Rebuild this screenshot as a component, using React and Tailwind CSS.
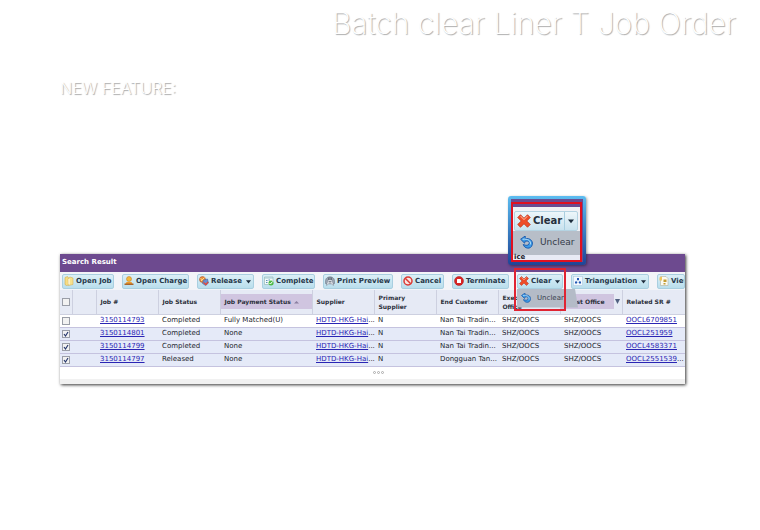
import React from 'react';

const orders = [
  { job: '3150114793', status: 'Completed', pay: 'Fully Matched(U)', customer: 'Nan Tai Tradin...', sr: 'OOCL6709851', more: '', checked: false },
  { job: '3150114801', status: 'Completed', pay: 'None', customer: 'Nan Tai Tradin...', sr: 'OOCL251959', more: '', checked: true },
  { job: '3150114799', status: 'Completed', pay: 'None', customer: 'Nan Tai Tradin...', sr: 'OOCL4583371', more: '', checked: true },
  { job: '3150114797', status: 'Released', pay: 'None', customer: 'Dongguan Tan...', sr: 'OOCL2551539', more: '...', checked: true },
];

function Svg({ children, className = 'size-[10px]' }) {
  return (
    <svg viewBox="0 0 20 20" className={`${className} shrink-0`} aria-hidden="true">
      {children}
    </svg>
  );
}

const FolderIcon = () => (
  <Svg>
    <path d="M2 3l5-2 2 3v14l-4 1-3-2z" fill="#f6dc84" stroke="#c9a13c" />
    <path d="M8 5l4-3 6 2v13l-9 2z" fill="#f6e08c" stroke="#d0aa48" />
    <path d="M10 6v11" stroke="#fff" strokeWidth="2" />
  </Svg>
);
const PersonIcon = () => (
  <Svg>
    <circle cx="10" cy="6" r="5" fill="#f5b93c" stroke="#c27a1c" />
    <path d="M5 12h10l2 4H3z" fill="#f09a2c" />
    <path d="M1 15h18v3H1z" fill="#a8662c" />
  </Svg>
);
const ReleaseIcon = () => (
  <Svg>
    <circle cx="7" cy="7" r="6" fill="#e88a3c" stroke="#a04a24" />
    <path d="M3 5l8 5M4 10l7-7" stroke="#ffe08a" strokeWidth="2" />
    <path d="M9 8l8-2 2 8-6 5-6-4z" fill="#6b8fd0" stroke="#36549a" />
    <path d="M9 13l5 4 4-5" fill="none" stroke="#e24a38" strokeWidth="2.5" />
  </Svg>
);
const CompleteIcon = () => (
  <Svg>
    <path d="M1 2h17v15H1z" fill="#f4faf8" stroke="#7ea5a0" />
    <path d="M1 3h17v2H1z" fill="#9cc4cf" />
    <path d="M4 9h3M9 8h3M4 13h3" stroke="#5c8fb8" strokeWidth="2" />
    <circle cx="14" cy="14" r="5" fill="#4dbb45" />
    <path d="M11 14l2 2 4-5" fill="none" stroke="#fff" strokeWidth="2" />
  </Svg>
);
const PrintIcon = () => (
  <Svg>
    <path d="M1 15V9C2-1 18-1 19 9v6l-3 2-2-8H6l-2 8z" fill="#9aa3b0" stroke="#65707e" />
    <path d="M6 8h8l3 11-4-3H7l-4 3z" fill="#f5f8fb" stroke="#7a8494" />
    <path d="M7 3v5m3-6v6m3-5v5M7 11h6M7 14h6" stroke="#56616f" strokeWidth="1.5" />
  </Svg>
);
const CancelIcon = () => (
  <Svg>
    <circle cx="10" cy="10" r="8" fill="#fbe4e0" stroke="#dc3a34" strokeWidth="3" />
    <path d="M4.500 4.500l11 11" stroke="#dc3a34" strokeWidth="3" />
  </Svg>
);
const StopIcon = () => (
  <Svg>
    <circle cx="10" cy="10" r="9" fill="#d92424" stroke="#a51b1b" />
    <rect x="6" y="6" width="8" height="8" rx="1" fill="#fff" />
  </Svg>
);
const CrossIcon = ({ className }) => (
  <Svg className={className}>
    <path d="M5 1l5 5 5-5 4 4-5 5 5 5-4 4-5-5-5 5-4-4 5-5-5-5z" fill="#ee4c28" stroke="#b92c14" strokeLinejoin="round" />
    <path d="M5 3l5 5 5-5" fill="none" stroke="#fba183" strokeWidth="1.5" />
  </Svg>
);
const UndoIcon = ({ className }) => (
  <Svg className={className}>
    <path d="M8 0L1 5l6 6 1-3c5-1 7 1 6 4-1 3-5 3-9 1 1 6 12 9 14 0 1-6-4-10-11-9z" fill="#3f9be6" stroke="#1c5cae" strokeWidth="1.5" strokeLinejoin="round" />
    <path d="M4 5c8-1 13 2 12 8" fill="none" stroke="#b8e2fb" strokeWidth="1.5" />
  </Svg>
);
const TriangleIcon = () => (
  <Svg>
    <rect x="1" y="1" width="18" height="18" fill="#f3f8fd" stroke="#a7c4dc" />
    <path d="M10 7l-4 6h8z" fill="none" stroke="#7ea4d4" />
    <path d="M8 4h4v4H8zM4 11h4v4H4zM12 11h4v4h-4z" fill="#2458b4" />
  </Svg>
);
const ViewIcon = () => (
  <Svg>
    <path d="M3 1h11l4 4v14H3z" fill="#fbfaf0" stroke="#a8a48c" />
    <path d="M1 3l5-2v8H1z" fill="#f0c65c" />
    <path d="M9 7h6v5H9zM9 14h4v3H9z" fill="#c39c34" />
  </Svg>
);

function Tool({ icon, label, width, menu }) {
  return (
    <button type="button" className={`flex h-[15px] items-center gap-[2px] overflow-hidden rounded-[2px] border border-[#a9cfe0] bg-linear-to-b from-[#dceff7] to-[#b9deec] pl-px font-bold whitespace-nowrap text-[#26384a] ${width}`}>
      {icon}
      <span>{label}</span>
      {menu && <Caret />}
    </button>
  );
}

function Caret({ className = 'size-[5px]' }) {
  return (
    <svg viewBox="0 0 4 4" className={`${className} mx-auto shrink-0`} aria-hidden="true">
      <path d="M0 1h4L2 3.500z" fill="#1d2c3c" />
    </svg>
  );
}

function Magnifier() {
  return (
    <div className="absolute -top-[78px] -left-[9px] z-20 h-[69px] w-[78px] rounded-[3px] bg-linear-to-b from-[#5cbcf0] to-[#1f4496] p-[3px] shadow-[1px_1px_3px_#0006]">
      <div className="h-full bg-[#6a4c90] pt-[3px] pr-px">
        <div className="flex h-full flex-col overflow-hidden border-2 border-[#e01020] bg-[#e8ebf5]">
          <div className="h-[3px] shrink-0 bg-[#6a4c90]" />
          <div className="bg-[#f1f1f5] px-px pt-[4px]">
            <button type="button" className="flex h-[20px] w-[64px] items-center rounded-[2px] border border-[#b4d3e2] bg-linear-to-b from-[#edf6fa] to-[#c8e2ee] pl-[2px] text-[10px] font-bold text-[#26303c]">
              <CrossIcon className="size-[14px]" />
              <span className="mr-[2px] ml-[2px]">Clear</span>
              <span className="flex h-full flex-1 items-center border-l border-[#a9cfe0]">
                <Caret className="size-[6px]" />
              </span>
            </button>
          </div>
          <button type="button" className="flex h-[24px] shrink-0 items-center gap-[7px] bg-[#b7bec8] pl-[7px] text-[9px] text-[#333b48]">
            <UndoIcon className="size-[13px] shrink-0" />
            Unclear
          </button>
          <div className="pl-px leading-[5px] font-bold">ice</div>
        </div>
      </div>
    </div>
  );
}

const head = 'border-r border-[#cdd0e0] pl-[4px] text-left align-middle leading-[9px] font-bold text-[#2c313c]';
const cell = 'whitespace-nowrap pl-[4px]';
const link = 'text-[#2a25b4] underline';

export default function App() {
  return (
    <main className="min-h-screen bg-white font-['DejaVu_Sans',Verdana,sans-serif] text-[7px] leading-[9px] text-[#22252c]">
      <h1 className="pt-[5px] pr-[24px] text-right font-[Inter,sans-serif] text-[30px] leading-[36px] font-extralight text-white [text-shadow:1px_1px_1px_#0005]">
        Batch clear Liner T Job Order
      </h1>
      <h2 className="mt-[37px] pl-[60px] font-[Inter,sans-serif] text-[16px] leading-[20px] font-light text-white [text-shadow:1px_1px_1px_#0005]">
        NEW FEATURE:
      </h2>

      <section className="mt-[156px] mr-[75px] ml-[60px] bg-white shadow-[1px_1px_3px_#000c]">
        <h3 className="h-[18px] bg-[#6d4a8f] pl-[2px] leading-[16px] font-bold text-white">Search Result</h3>

        <div className="flex h-[18px] items-center gap-[8px] bg-[#f3f4f8] pl-[2px]">
          <Tool icon={<FolderIcon />} label="Open Job" width="w-[52px]" />
          <Tool icon={<PersonIcon />} label="Open Charge" width="w-[67px]" />
          <Tool icon={<ReleaseIcon />} label="Release" width="w-[57px]" menu />
          <Tool icon={<CompleteIcon />} label="Complete" width="w-[53px]" />
          <Tool icon={<PrintIcon />} label="Print Preview" width="w-[70px]" />
          <Tool icon={<CancelIcon />} label="Cancel" width="w-[43px]" />
          <Tool icon={<StopIcon />} label="Terminate" width="w-[57px]" />
          <div className="relative">
            <Tool icon={<CrossIcon />} label="Clear" width="w-[46px]" menu />
            <button type="button" className="absolute top-[15px] left-0 z-10 flex h-[19px] w-[61px] items-center gap-[6px] bg-[#b4bbc7] pl-[4px] text-[#39414e] [clip-path:polygon(0_0,95%_0,100%_100%,0_100%)]">
              <UndoIcon />
              Unclear
            </button>
            <div className="pointer-events-none absolute -top-[6px] -left-[3px] z-10 h-[43px] w-[52px] border-2 border-[#e02432]" />
            <Magnifier />
          </div>
          <Tool icon={<TriangleIcon />} label="Triangulation" width="w-[78px]" menu />
          <Tool icon={<ViewIcon />} label="View" width="min-w-0 flex-1" />
        </div>

        <table className="w-full table-fixed border-collapse">
          <colgroup>
            <col className="w-[12px]" />
            <col className="w-[24px]" />
            <col className="w-[62px]" />
            <col className="w-[62px]" />
            <col className="w-[92px]" />
            <col className="w-[62px]" />
            <col className="w-[62px]" />
            <col className="w-[62px]" />
            <col className="w-[62px]" />
            <col className="w-[62px]" />
            <col />
          </colgroup>
          <thead className="text-[6px]">
            <tr className="h-[24px] border-b border-[#cdd0e0] bg-[#e6eaf5]">
              <th className="border-r border-[#cdd0e0]">
                <Check label="Select all" />
              </th>
              <th className="border-r border-[#cdd0e0]" />
              <th className={head}>Job #</th>
              <th className={head}>Job Status</th>
              <th className="border-r border-[#cdd0e0] text-left align-middle font-bold whitespace-nowrap">
                <div className="flex h-[15px] items-center gap-[3px] bg-[#d0c5e0] pl-[4px] text-[#2c313c]">
                  Job Payment Status
                  <svg viewBox="0 0 5 4" className="h-[4px] w-[5px]" aria-hidden="true">
                    <path d="M0 3.500h5L2.500 1z" fill="#8a7fa0" />
                  </svg>
                </div>
              </th>
              <th className={head}>Supplier</th>
              <th className={head}>Primary<br />Supplier</th>
              <th className={head}>End Customer</th>
              <th className={head}>Execution<br />Office</th>
              <th className="border-r border-[#cdd0e0] text-left align-middle font-bold whitespace-nowrap">
                <div className="flex items-center justify-between text-[#2c313c]">
                  <span className="flex h-[15px] w-[53px] items-center justify-end bg-[#d0c5e0] pr-[9px]">Cost Office</span>
                  <svg viewBox="0 0 5 5" className="mr-[2px] size-[5px]" aria-hidden="true">
                    <path d="M0 0h5L2.500 5z" fill="#506080" />
                  </svg>
                </div>
              </th>
              <th className="pl-[4px] text-left font-bold text-[#2c313c]">Related SR #</th>
            </tr>
          </thead>
          <tbody>
            {orders.map((o) => (
              <tr key={o.job} className="h-[13px] border-b border-[#c5c3df] bg-white has-checked:bg-[#e5eaf8]">
                <td>
                  <Check label={`Select ${o.job}`} checked={o.checked} />
                </td>
                <td />
                <td className={cell}><a href="#job" className={link}>{o.job}</a></td>
                <td className={cell}>{o.status}</td>
                <td className={cell}>{o.pay}</td>
                <td className={cell}><a href="#supplier" className={link}>HDTD-HKG-Hai</a>...</td>
                <td className={cell}>N</td>
                <td className={cell}>{o.customer}</td>
                <td className={cell}>SHZ/OOCS</td>
                <td className={cell}>SHZ/OOCS</td>
                <td className={cell}><a href="#sr" className={link}>{o.sr}</a>{o.more}</td>
              </tr>
            ))}
          </tbody>
        </table>
        <div className="flex h-[12px] items-center justify-center gap-px pl-[12px]">
          <i className="size-[3px] rounded-full border border-[#aaa]" />
          <i className="size-[3px] rounded-full border border-[#aaa]" />
          <i className="size-[3px] rounded-full border border-[#aaa]" />
        </div>
        <div className="h-[5px] bg-[#f1f1f1]" />
      </section>
    </main>
  );
}

function Check({ label, checked = false }) {
  return (
    <label className="ml-[2px] flex size-[8px]">
      <input type="checkbox" aria-label={label} defaultChecked={checked} className="peer size-[8px] appearance-none border border-[#9a9ea8] bg-[#f2f2f2]" />
      <svg viewBox="0 0 8 8" className="pointer-events-none -ml-[8px] hidden size-[8px] peer-checked:block" aria-hidden="true">
        <path d="M2 4l1.500 2L6 2" fill="none" stroke="#27386e" strokeWidth="1.200" />
      </svg>
    </label>
  );
}
